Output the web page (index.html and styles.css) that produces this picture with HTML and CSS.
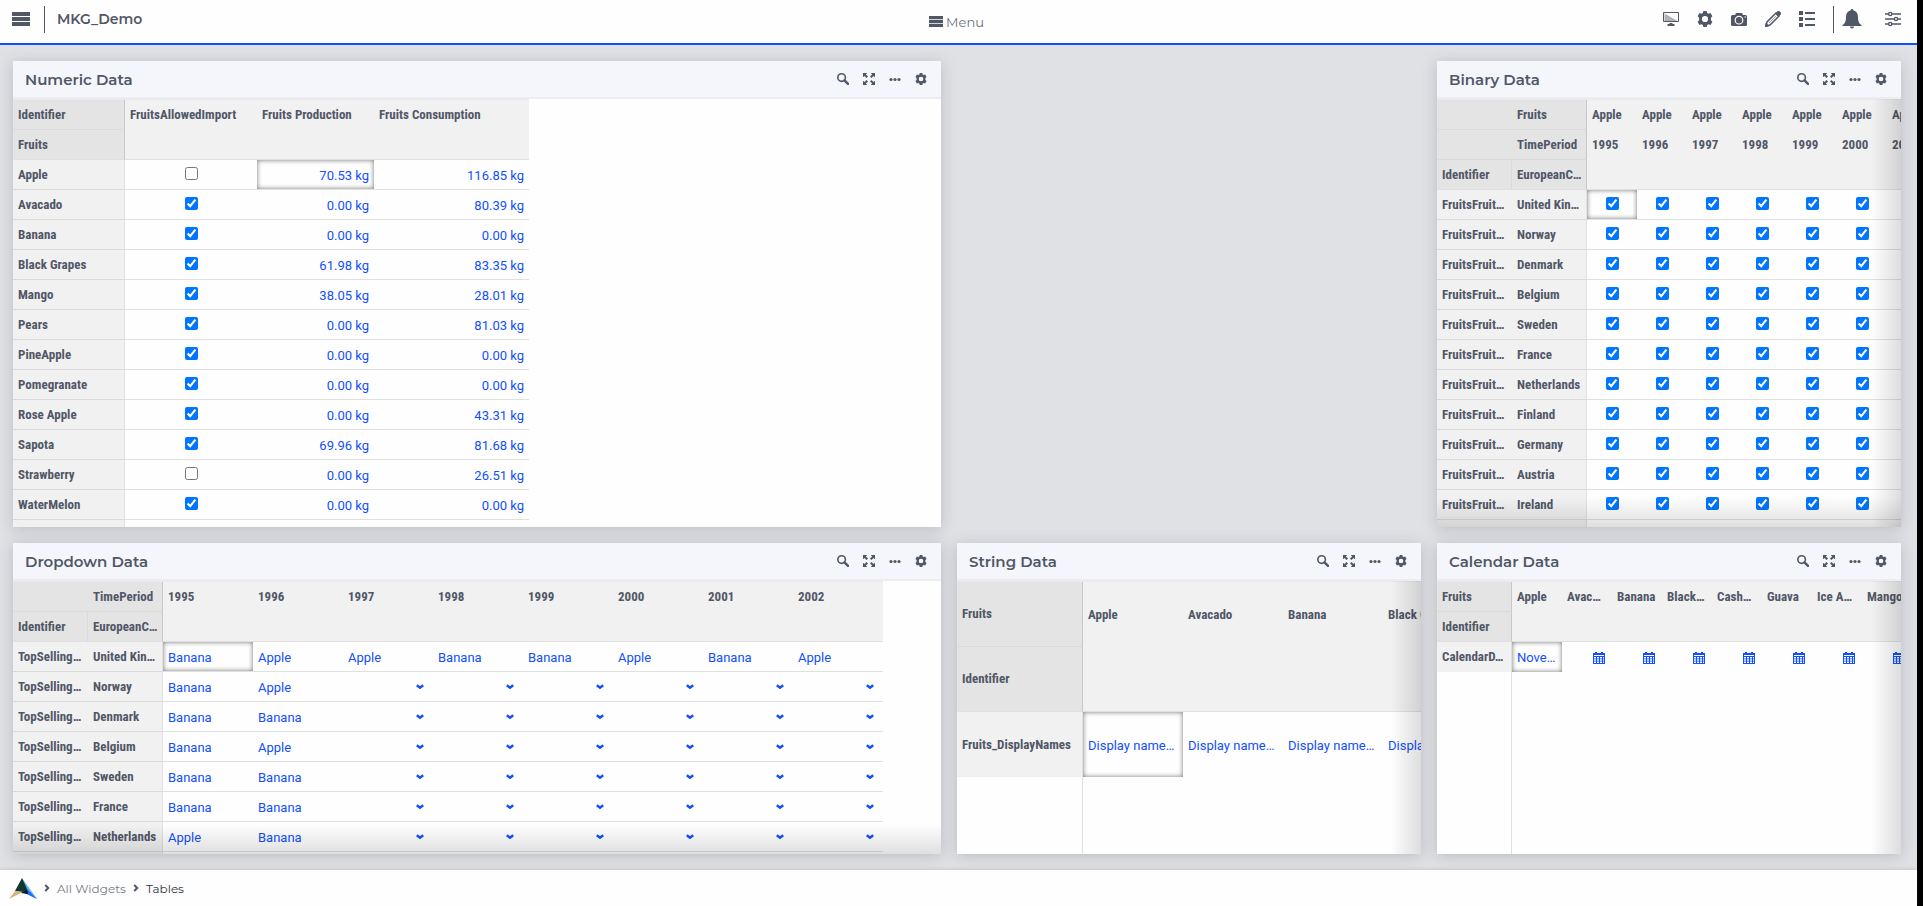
FILE: index.html
```html
<!DOCTYPE html>
<html lang="en">
<head>
    <meta charset="UTF-8">
    <meta name="viewport" content="width=device-width, initial-scale=1.0">
    <title>MKG_Demo - Tables</title>
    <link rel="stylesheet" href="styles.css">
</head>
<body>
    <!-- Shared icons -->
    <svg class="sprite" aria-hidden="true">
        <symbol id="i-bars" viewBox="0 0 18 14"><path d="M0 0h18v4H0zM0 5h18v4H0zM0 10h18v4H0z"/></symbol>
        <symbol id="i-gear" viewBox="0 0 16 16"><path fill-rule="evenodd" d="M6.300 0h3.400l.5 2 1.300.8 2-.7 1.900 3.200-1.500 1.400v2.600l1.500 1.400-1.900 3.200-2-.7-1.300.8-.5 2H6.300l-.5-2-1.300-.8-2 .7L.6 10.700l1.500-1.400V6.700L.6 5.300l1.900-3.200 2 .7L5.800 2zM8 4.900a3.100 3.100 0 1 0 0 6.200 3.100 3.100 0 0 0 0-6.200z"/></symbol>
        <symbol id="i-search" viewBox="0 0 12 12"><circle cx="4.600" cy="4.600" r="3.800" fill="none" stroke="currentColor" stroke-width="1.600"/><path d="M7.500 7.300l3.500 3.500" stroke="currentColor" stroke-width="2.400" stroke-linecap="round"/></symbol>
        <symbol id="i-expand" viewBox="0 0 12 12"><path d="M0 0h4.200L2.900 1.400 5 3.600 3.600 5 1.400 2.900 0 4.200zM12 0v4.200l-1.400-1.300L8.400 5 7 3.600l2.100-2.200L7.800 0zM0 12V7.800l1.400 1.300L3.600 7 5 8.400l-2.100 2.200L4.200 12zM12 12H7.800l1.300-1.400L7 8.400 8.400 7l2.200 2.100L12 7.800z"/></symbol>
        <symbol id="i-dots" viewBox="0 0 12 12"><circle cx="2" cy="6.500" r="1.600"/><circle cx="6" cy="6.500" r="1.600"/><circle cx="10" cy="6.500" r="1.600"/></symbol>
        <symbol id="i-down" viewBox="0 0 8 6"><path d="M.8 1.200L4 3.800l3.200-2.600" fill="none" stroke="currentColor" stroke-width="2.400"/></symbol>
        <symbol id="i-right" viewBox="0 0 6 8"><path d="M1.200 1l3 3-3 3" fill="none" stroke="currentColor" stroke-width="2"/></symbol>
        <symbol id="i-calendar" viewBox="0 0 12 12"><path fill-rule="evenodd" d="M0 1h2V0h2v1h4V0h2v1h2v11H0zM1 5v1.500h2V5zm3 0v1.500h2V5zm3 0v1.500h2V5zm3 0v1.500h1V5zM1 7.300v1.500h2V7.300zm3 0v1.500h2V7.300zm3 0v1.500h2V7.300zm3 0v1.500h1V7.300zM1 9.600v1.500h2V9.600zm3 0v1.500h2V9.600zm3 0v1.500h2V9.600zm3 0v1.500h1V9.600zM1 3v.9h10V3z"/></symbol>
    </svg>

    <div class="app">
        <header class="topbar">
            <div class="topbar-side">
                <button type="button" class="icon-button" aria-label="Open navigation"><svg class="icon-bars"><use href="#i-bars"/></svg></button>
                <span class="divider"></span>
                <h1>MKG_Demo</h1>
            </div>
            <button type="button" class="menu-button"><svg class="icon-menu"><use href="#i-bars"/></svg>Menu</button>
            <div class="topbar-side tools">
                <button type="button" class="icon-button" aria-label="Presentation">
                    <svg class="icon" viewBox="0 0 16 16"><path d="M.5 1.500h15v9H.5z" fill="none" stroke="currentColor"/><path d="M1.500 2.500l13 7.500h-13z" opacity=".45"/><path d="M6.500 12h3v1h2v2h-7v-2h2z"/></svg>
                </button>
                <button type="button" class="icon-button" aria-label="Settings"><svg class="icon"><use href="#i-gear"/></svg></button>
                <button type="button" class="icon-button" aria-label="Snapshot">
                    <svg class="icon" viewBox="0 0 16 16"><path fill-rule="evenodd" d="M5 2h6l1 2h2.500A1.500 1.500 0 0 1 16 5.500v8a1.500 1.500 0 0 1-1.500 1.500h-13A1.500 1.500 0 0 1 0 13.500v-8A1.500 1.500 0 0 1 1.500 4H4zM8 4.800a4.400 4.400 0 1 0 0 8.800 4.400 4.400 0 0 0 0-8.800zM13.500 5.500v1H15v-1z"/><circle cx="8" cy="9.200" r="3.200"/></svg>
                </button>
                <button type="button" class="icon-button" aria-label="Edit">
                    <svg class="icon" viewBox="0 0 16 16"><path d="M1 15l1-4L11 2l3 3-9 9z" fill="none" stroke="currentColor" stroke-width="1.500"/><path d="M4 12l7.500-7.500M10.500 2.500l2-2a1.500 1.500 0 0 1 2 0l1 1a1.500 1.500 0 0 1 0 2l-2 2zM0 16l1-4 3 3z" stroke="currentColor" stroke-width=".6"/></svg>
                </button>
                <button type="button" class="icon-button" aria-label="List">
                    <svg class="icon" viewBox="0 0 16 16"><path d="M0 0h4v4H0zM0 6h4v4H0zM0 12h4v4H0zM6 1h10v2H6zM6 7h10v2H6zM6 13h10v2H6z"/></svg>
                </button>
                <span class="divider"></span>
                <button type="button" class="icon-button bell" aria-label="Notifications">
                    <svg class="icon-large" viewBox="0 0 20 20"><path d="M10 0a1.500 1.500 0 0 1 1.500 1.600C14.500 2.300 16 4.600 16 8c0 4.500 1 6.500 3.500 8v1H.5v-1C3 14.500 4 12.500 4 8c0-3.400 1.500-5.700 4.500-6.400A1.500 1.500 0 0 1 10 0zM8 17.500h4a2 2 0 0 1-4 0z"/></svg>
                </button>
                <button type="button" class="icon-button" aria-label="Filters">
                    <svg class="icon" viewBox="0 0 16 16" fill="none" stroke="currentColor" stroke-width="1.400"><path class="no-fill" d="M0 3h3.500M7 3h9M0 8h9M13 8h3M0 13h3.500M7 13h9"/><circle class="no-fill" cx="5.200" cy="3" r="1.600"/><circle class="no-fill" cx="11" cy="8" r="1.600"/><circle class="no-fill" cx="5.200" cy="13" r="1.600"/></svg>
                </button>
            </div>
        </header>

        <main class="widgets">
            <section class="card" data-table="numeric"></section>
            <section class="card last" data-table="binary"></section>
            <section class="card" data-table="dropdown"></section>
            <section class="card" data-table="string"></section>
            <section class="card" data-table="calendar"></section>
        </main>

        <footer class="footer">
            <svg class="logo" viewBox="0 0 28 21" aria-hidden="true">
                <path d="M13 0L6 13l8 1 5-3z" fill="#12382c"/>
                <path d="M6 13L0 21l12-6 2-1z" fill="#dcb27c"/>
                <path d="M13 0l5 11-4 3 14 7z" fill="#59b8f2"/>
                <path d="M18 11l10 10-12-6z" fill="#1769ff"/>
                <path d="M12 15l6-4 1 5z" fill="#07122b"/>
            </svg>
            <nav class="breadcrumb">
                <svg class="chevron"><use href="#i-right"/></svg>
                <a href="#">All Widgets</a>
                <svg class="chevron"><use href="#i-right"/></svg>
                <a href="#" class="current">Tables</a>
            </nav>
        </footer>
    </div>

    <script src="script.js"></script>
</body>
</html>
```
FILE: styles.css
```css
* {
    box-sizing: border-box;
}
html {
    background-color: #000;
}
body {
    margin: 0;
    padding-right: 6px;
    font-family: Roboto, sans-serif;
    font-size: 13px;
    color: #505767;
}
button {
    padding: 0;
    border: none;
    background: none;
    color: inherit;
    font: inherit;
    cursor: pointer;
}
svg {
    display: block;
    fill: currentColor;
}
.no-fill {
    fill: none;
}
.sprite {
    position: absolute;
    width: 0;
    height: 0;
}
.app {
    display: flex;
    flex-direction: column;
    height: 100vh;
    background-color: #e0e1e4;
}

/* Top bar */
.topbar {
    display: flex;
    align-items: center;
    height: 45px;
    padding: 0 16px 5px 12px;
    background-color: #fefefe;
    border-bottom: 2px solid #1150ff;
    font-family: Montserrat, Inter, sans-serif;
}
.topbar-side {
    display: flex;
    align-items: center;
    flex: 1;
}
.divider {
    width: 1px;
    height: 27px;
    margin: 0 12px 0 14px;
    background-color: #505767;
}
.topbar h1 {
    margin: 0;
    font-size: 14px;
    font-weight: 600;
}
.menu-button {
    display: flex;
    align-items: center;
    gap: 3px;
    padding-top: 5px;
    font-size: 13px;
    color: #6d7280;
}
.icon-bars {
    width: 18px;
    height: 14px;
}
.icon-menu {
    width: 14px;
    height: 11px;
    color: #505767;
}
.tools {
    justify-content: flex-end;
    gap: 18px;
}
.tools .divider {
    margin: 0 -10px 0 0;
}
.bell {
    margin-right: 5px;
}
.icon {
    width: 16px;
    height: 16px;
}
.icon-large {
    width: 20px;
    height: 20px;
}

/* Widgets */
.widgets {
    flex: 1;
    min-height: 0;
    display: grid;
    grid-template-columns: 2fr 1fr 1fr;
    grid-template-rows: 3fr 2fr;
    gap: 16px;
    padding: 16px 16px 16px 13px;
}
.card {
    display: flex;
    flex-direction: column;
    min-width: 0;
    min-height: 0;
    background-color: #fefefe;
    box-shadow: 0 2px 14px rgba(70, 78, 100, 0.25);
}
.last {
    grid-column: 3;
}
.card-header {
    display: flex;
    align-items: center;
    justify-content: space-between;
    height: 38px;
    flex-shrink: 0;
    padding: 0 14px 0 12px;
    background-color: #f4f6fb;
    border-bottom: 2px solid #ebedf1;
}
.card-header h2 {
    margin: 0;
    font-family: Montserrat, Inter, sans-serif;
    font-size: 15px;
    font-weight: 600;
}
.card-actions {
    display: flex;
    gap: 14px;
}
.card-actions svg {
    width: 12px;
    height: 12px;
}
.card-body {
    position: relative;
    display: flex;
    flex-direction: column;
    flex: 1;
    min-height: 0;
    overflow: hidden;
}
.fade-right::before,
.fade-bottom::after {
    content: "";
    position: absolute;
    right: 0;
    bottom: 0;
    z-index: 1;
    pointer-events: none;
}
.fade-right::before {
    top: 0;
    width: 30px;
    background: linear-gradient(to right, transparent, rgba(0, 0, 0, 0.13));
}
.fade-bottom::after {
    left: 0;
    height: 30px;
    background: linear-gradient(transparent, rgba(0, 0, 0, 0.12));
}

/* Tables */
.grid {
    flex-shrink: 0;
    table-layout: fixed;
    width: 0;
    border-spacing: 0;
    border-top: 1px solid #e9e9e9;
}
.grid th,
.grid td {
    height: 30px;
    padding: 0 5px;
    border-bottom: 1px solid #e0e0e0;
    overflow: hidden;
    white-space: nowrap;
    text-align: left;
    line-height: 20px;
}
.grid th {
    font-family: "Roboto Condensed", Roboto, sans-serif;
    font-weight: 700;
    background-color: #f1f1f1;
}
.grid td {
    position: relative;
    padding-top: 2px;
    color: #1150ff;
    background-color: #fefefe;
}
.grid thead th {
    padding-top: 1px;
    border-bottom-color: transparent;
}
.grid thead tr:last-child th {
    border-bottom-color: #e0e0e0;
}
.grid thead .corner {
    padding-top: 0;
    background-color: #e4e4e4;
    border-bottom-color: #dadada;
}
.grid thead tr:last-child .corner:not(.edge) {
    border-right: 1px solid #dadada;
}
.grid .edge {
    border-right: 1px solid #e0e0e0;
}
.grid thead .edge {
    border-right-color: #c8c8c8;
}
.grid tbody th {
    border-bottom-color: #dadada;
}
.grid.tall th,
.grid.tall td {
    height: 65px;
}
.grid.single tbody th,
.grid.single tbody td {
    border-bottom: none;
}
.grid .number {
    text-align: right;
}
.grid .check {
    padding: 0 0 3px;
    text-align: center;
}
.grid .check input {
    display: block;
    width: 13px;
    height: 13px;
    margin: 0 auto;
}
.grid .selected {
    box-shadow: inset 0 0 5px rgba(0, 0, 0, 0.55);
}
.grid select {
    display: block;
    width: 100%;
    padding: 0;
    border: none;
    background: none;
    appearance: none;
    color: inherit;
    font: inherit;
}
.grid .arrow {
    position: absolute;
    top: 12px;
    right: 9px;
    width: 8px;
    height: 6px;
    pointer-events: none;
}
.grid .date-button {
    display: block;
    margin: 0 2px 0 auto;
}
.grid .date-button svg {
    width: 12px;
    height: 12px;
}
.remainder {
    flex: 1;
    border-right: 1px solid #e0e0e0;
}

/* Footer */
.footer {
    display: flex;
    align-items: center;
    gap: 7px;
    height: 36px;
    padding-left: 9px;
    background-color: #fefefe;
    box-shadow: 0 0 4px rgba(70, 78, 100, 0.25);
    font-family: Montserrat, Inter, sans-serif;
    font-size: 12px;
}
.logo {
    width: 28px;
    height: 21px;
}
.breadcrumb {
    display: flex;
    align-items: center;
    gap: 7px;
}
.breadcrumb a {
    color: #777b84;
    text-decoration: none;
}
.breadcrumb .current {
    color: #2f333b;
}
.chevron {
    width: 6px;
    height: 8px;
}
```
FILE: script.js
```js
var years = ['1995', '1996', '1997', '1998', '1999', '2000', '2001', '2002'];
var countries = ['United Kin…', 'Norway', 'Denmark', 'Belgium', 'Sweden', 'France',
    'Netherlands', 'Finland', 'Germany', 'Austria', 'Ireland'];

function repeat(value, count) {
    return Array(count).fill(value);
}

// corner: header rows above the row labels, head: header rows above the data
var tables = {
    numeric: {
        title: 'Numeric Data',
        labelWidths: [112],
        widths: [132, 117, 155],
        types: ['check', 'number', 'number'],
        corner: [['Identifier'], ['Fruits']],
        head: [['FruitsAllowedImport', 'Fruits Production', 'Fruits Consumption']],
        selected: 1,
        rows: [
            [['Apple'], [false, '70.53 kg', '116.85 kg']],
            [['Avacado'], [true, '0.00 kg', '80.39 kg']],
            [['Banana'], [true, '0.00 kg', '0.00 kg']],
            [['Black Grapes'], [true, '61.98 kg', '83.35 kg']],
            [['Mango'], [true, '38.05 kg', '28.01 kg']],
            [['Pears'], [true, '0.00 kg', '81.03 kg']],
            [['PineApple'], [true, '0.00 kg', '0.00 kg']],
            [['Pomegranate'], [true, '0.00 kg', '0.00 kg']],
            [['Rose Apple'], [true, '0.00 kg', '43.31 kg']],
            [['Sapota'], [true, '69.96 kg', '81.68 kg']],
            [['Strawberry'], [false, '0.00 kg', '26.51 kg']],
            [['WaterMelon'], [true, '0.00 kg', '0.00 kg']],
            [[''], [null, '', '']]
        ]
    },
    binary: {
        title: 'Binary Data',
        classes: 'fade-right fade-bottom',
        labelWidths: [75, 75],
        widths: repeat(50, 7),
        types: repeat('check', 7),
        corner: [['', 'Fruits'], ['', 'TimePeriod'], ['Identifier', 'EuropeanC…']],
        head: [repeat('Apple', 7), years.slice(0, 7)],
        selected: 0,
        rows: countries.map(function(country) {
            return [['FruitsFruit…', country], repeat(true, 7)];
        }).concat([[['', ''], repeat(null, 7)]])
    },
    dropdown: {
        title: 'Dropdown Data',
        classes: 'fade-bottom',
        labelWidths: [75, 75],
        widths: repeat(90, 8),
        types: repeat('select', 8),
        corner: [['', 'TimePeriod'], ['Identifier', 'EuropeanC…']],
        head: [years],
        selected: 0,
        rows: [
            ['Banana', 'Apple', 'Apple', 'Banana', 'Banana', 'Apple', 'Banana', 'Apple'],
            ['Banana', 'Apple'],
            ['Banana', 'Banana'],
            ['Banana', 'Apple'],
            ['Banana', 'Banana'],
            ['Banana', 'Banana'],
            ['Apple', 'Banana']
        ].map(function(fruits, i) {
            return [['TopSelling…', countries[i]], fruits.concat(repeat('', 8 - fruits.length))];
        }).concat([[['', ''], repeat(null, 8)]])
    },
    string: {
        title: 'String Data',
        classes: 'fade-right',
        tableClass: 'tall single',
        labelWidths: [126],
        widths: repeat(100, 4),
        types: repeat('text', 4),
        corner: [['Fruits'], ['Identifier']],
        head: [['Apple', 'Avacado', 'Banana', 'Black Grapes']],
        selected: 0,
        rows: [[['Fruits_DisplayNames'], repeat('Display name…', 4)]]
    },
    calendar: {
        title: 'Calendar Data',
        classes: 'fade-right',
        tableClass: 'single',
        labelWidths: [75],
        widths: repeat(50, 8),
        types: repeat('date', 8),
        corner: [['Fruits'], ['Identifier']],
        head: [['Apple', 'Avac…', 'Banana', 'Black…', 'Cash…', 'Guava', 'Ice A…', 'Mango']],
        selected: 0,
        rows: [[['CalendarD…'], ['Nove…'].concat(repeat('', 7))]]
    }
};

function icon(name, className) {
    return '<svg class="' + (className || '') + '"><use href="#i-' + name + '"/></svg>';
}

function cellContent(type, value, label) {
    if (value === null) {
        return '';
    }
    if (type === 'check') {
        return '<input type="checkbox" aria-label="' + label + '"' + (value ? ' checked' : '') + '>';
    }
    if (type === 'select') {
        var options = ['', 'Apple', 'Banana'].map(function(name) {
            return '<option' + (name === value ? ' selected' : '') + '>' + name + '</option>';
        }).join('');
        return '<select aria-label="' + label + '">' + options + '</select>' + (value ? '' : icon('down', 'arrow'));
    }
    if (type === 'date' && !value) {
        return '<button type="button" class="date-button" aria-label="Pick date for ' + label + '">' + icon('calendar') + '</button>';
    }
    return value;
}

function labelCells(labels, className) {
    return labels.map(function(text, i) {
        var edge = i === labels.length - 1 ? ' edge' : '';
        return '<th class="' + className + edge + '">' + text + '</th>';
    }).join('');
}

function buildTable(table) {
    var html = '<table class="grid ' + (table.tableClass || '') + '"><colgroup>';
    table.labelWidths.concat(table.widths).forEach(function(width) {
        html += '<col style="width: ' + width + 'px">';
    });
    html += '</colgroup><thead>';
    table.corner.forEach(function(labels, i) {
        var names = table.head[i] || repeat('', table.widths.length);
        html += '<tr>' + labelCells(labels, 'corner') + names.map(function(name) {
            return '<th>' + name + '</th>';
        }).join('') + '</tr>';
    });
    html += '</thead><tbody>';
    table.rows.forEach(function(row, r) {
        html += '<tr>' + labelCells(row[0], 'label');
        row[1].forEach(function(value, c) {
            var selected = r === 0 && c === table.selected ? ' selected' : '';
            var label = row[0].join(' ') + ' ' + table.head[table.head.length - 1][c];
            html += '<td class="' + table.types[c] + selected + '">' + cellContent(table.types[c], value, label) + '</td>';
        });
        html += '</tr>';
    });
    return html + '</tbody></table>';
}

document.querySelectorAll('[data-table]').forEach(function(card) {
    var table = tables[card.dataset.table];
    var labelWidth = table.labelWidths.reduce(function(a, b) { return a + b; });
    card.innerHTML =
        '<div class="card-header"><h2>' + table.title + '</h2><div class="card-actions">' +
        '<button type="button" aria-label="Search">' + icon('search') + '</button>' +
        '<button type="button" aria-label="Full screen">' + icon('expand') + '</button>' +
        '<button type="button" aria-label="More">' + icon('dots') + '</button>' +
        '<button type="button" aria-label="Settings">' + icon('gear') + '</button>' +
        '</div></div>' +
        '<div class="card-body ' + (table.classes || '') + '">' + buildTable(table) +
        '<div class="remainder" style="width: ' + labelWidth + 'px"></div></div>';
});
```
